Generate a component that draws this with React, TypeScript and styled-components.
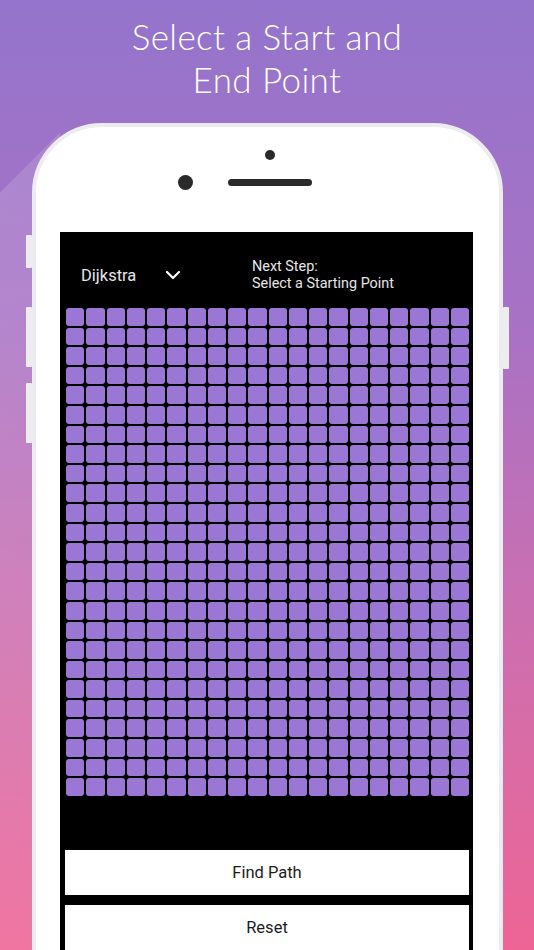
import React from "react";
import styled, { createGlobalStyle } from "styled-components";

const Global = createGlobalStyle`
  html, body { margin: 0; padding: 0; }
  body { font-family: Roboto, "Liberation Sans", sans-serif; }
`;

const Page = styled.div`
  position: relative;
  width: 534px;
  height: 950px;
  overflow: hidden;
  background: linear-gradient(180deg, #9474cc 0%, #a972c4 35%, #cc6fb0 65%, #ee6595 100%);
  display: flex;
  flex-direction: column;
  align-items: center;
`;

const Sheen = styled.div`
  position: absolute;
  left: 0;
  top: 0;
  width: 60px;
  height: 950px;
  background: linear-gradient(135deg, rgba(255,255,255,0) 0, rgba(255,255,255,0) 136px, rgba(255,255,255,0.14) 136.5px, rgba(255,255,255,0.1) 100%);
  pointer-events: none;
`;

const Title = styled.h1`
  position: relative;
  margin: 0;
  padding-top: 15px;
  font-family: Lato, "Open Sans", sans-serif;
  font-weight: 300;
  font-size: 35px;
  line-height: 43px;
  color: #ffffff;
  text-align: center;
  letter-spacing: 0.4px;
  flex: none;
`;

const Phone = styled.div`
  position: relative;
  flex: none;
  margin-top: 22px;
  align-self: flex-start;
  margin-left: 32px;
  width: 463px;
  height: 900px;
  border: 4px solid #ececf1;
  border-radius: 70px;
  background: #ffffff;
  display: flex;
  flex-direction: column;
`;

const SideButton = styled.div<{ $side: "left" | "right"; $top: number; $h: number }>`
  position: absolute;
  ${(p) => (p.$side === "left" ? "left: -10px;" : "right: -10px;")}
  top: ${(p) => p.$top}px;
  width: 6px;
  height: ${(p) => p.$h}px;
  background: #ececf1;
  border-radius: 1px;
`;

const Bezel = styled.div`
  position: relative;
  height: 105px;
  flex: none;
`;

const TopDot = styled.div`
  position: absolute;
  left: 229px;
  top: 23px;
  width: 10px;
  height: 10px;
  border-radius: 50%;
  background: #2a2a2a;
`;

const Camera = styled.div`
  position: absolute;
  left: 142px;
  top: 48px;
  width: 15px;
  height: 15px;
  border-radius: 50%;
  background: #2a2a2a;
`;

const Speaker = styled.div`
  position: absolute;
  left: 192px;
  top: 52px;
  width: 84px;
  height: 7px;
  border-radius: 4px;
  background: #2a2a2a;
`;

const Screen = styled.div`
  margin-left: 24px;
  width: 413px;
  flex: 1;
  background: #000000;
  display: flex;
  flex-direction: column;
  padding: 0 0 0 6px;
  box-sizing: border-box;
`;

const Header = styled.div`
  height: 76px;
  padding-top: 10px;
  box-sizing: border-box;
  display: flex;
  align-items: center;
  padding-left: 15px;
`;

const Selector = styled.div`
  width: 100px;
  display: flex;
  align-items: center;
  justify-content: space-between;
  color: #e6e6e6;
  font-size: 16.5px;
`;

const StepText = styled.div`
  margin-left: 71px;
  color: #e6e6e6;
  font-size: 14.4px;
  line-height: 17px;
`;

const Grid = styled.div`
  width: 403px;
  display: grid;
  grid-template-columns: repeat(20, 1fr);
  grid-auto-rows: 17.6px;
  gap: 2px;
`;

const Cell = styled.div`
  background: #9a77d4;
  border-radius: 3px;
`;

const Actions = styled.div`
  margin-top: 54px;
  display: flex;
  flex-direction: column;
  gap: 10px;
  width: 404px;
  margin-left: -1px;
`;

const ActionButton = styled.button`
  height: 45px;
  border: none;
  background: #ffffff;
  color: #1c1c1c;
  font-family: Roboto, "Liberation Sans", sans-serif;
  font-size: 16.5px;
  padding: 0;
`;

const Chevron = () => (
  <svg width="16" height="12" viewBox="0 0 16 12">
    <path d="M2 3 L8 9 L14 3" fill="none" stroke="#ffffff" strokeWidth="2.2" strokeLinecap="round" strokeLinejoin="round" />
  </svg>
);

const cells = Array.from({ length: 500 }, (_, i) => i);

export default function App() {
  return (
    <>
      <Global />
      <Page>
        <Sheen />
        <Title>
          Select a Start and
          <br />
          End Point
        </Title>
        <Phone>
          <SideButton $side="left" $top={108} $h={33} />
          <SideButton $side="left" $top={180} $h={60} />
          <SideButton $side="left" $top={256} $h={60} />
          <SideButton $side="right" $top={180} $h={62} />
          <Bezel>
            <TopDot />
            <Camera />
            <Speaker />
          </Bezel>
          <Screen>
            <Header>
              <Selector>
                <span>Dijkstra</span>
                <Chevron />
              </Selector>
              <StepText>
                Next Step:
                <br />
                Select a Starting Point
              </StepText>
            </Header>
            <Grid>
              {cells.map((i) => (
                <Cell key={i} />
              ))}
            </Grid>
            <Actions>
              <ActionButton>Find Path</ActionButton>
              <ActionButton>Reset</ActionButton>
            </Actions>
          </Screen>
        </Phone>
      </Page>
    </>
  );
}
